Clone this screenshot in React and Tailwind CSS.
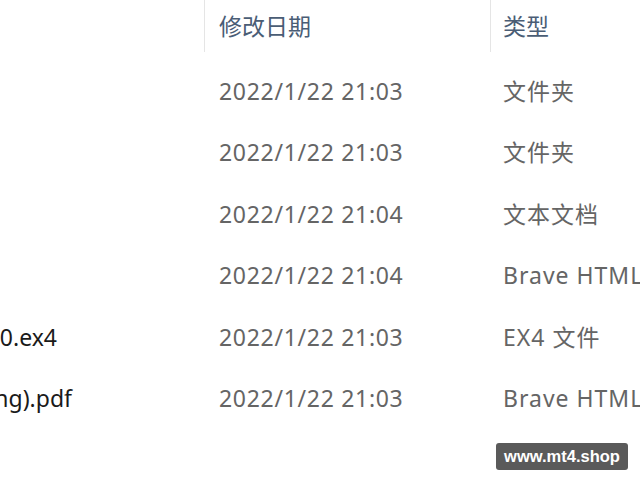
import React from "react";

const rows = [
  { name: "", date: "2022/1/22 21:03", type: "文件夹" },
  { name: "", date: "2022/1/22 21:03", type: "文件夹" },
  { name: "", date: "2022/1/22 21:04", type: "文本文档" },
  { name: "", date: "2022/1/22 21:04", type: "Brave HTML Document" },
  { name: "EA v10.ex4", date: "2022/1/22 21:03", type: "EX4 文件", pad: "pr-[148px]" },
  { name: "Manual (Setting).pdf", date: "2022/1/22 21:03", type: "Brave HTML Document", pad: "pr-[133px]" },
];

export default function App() {
  return (
    <div className="relative w-[640px] h-[480px] overflow-hidden bg-white font-['Noto_Sans','Noto_Sans_CJK_SC',sans-serif] text-[23px]">
      <div className="flex h-[52px] items-stretch">
        <div className="w-[204px] shrink-0" />
        <div className="w-[286px] shrink-0 border-l border-[#e5e5e5] flex items-center pl-[14px] text-[#4a5d75]">
          修改日期
        </div>
        <div className="flex-1 border-l border-[#e5e5e5] flex items-center pl-[12px] text-[#4a5d75]">
          类型
        </div>
      </div>
      <div className="pt-[8px]">
        {rows.map((r, i) => (
          <div key={i} className="flex h-[61.5px] items-center whitespace-nowrap">
            <div className={`w-[205px] shrink-0 flex justify-end overflow-hidden text-[#1a1a1a] ${r.pad || ""}`}>
              <span>{r.name}</span>
            </div>
            <div className="w-[286px] shrink-0 pl-[14px] text-[#656565] tracking-[0.7px]">{r.date}</div>
            <div className="flex-1 overflow-hidden pl-[12px] text-[#656565] tracking-[1px]">{r.type}</div>
          </div>
        ))}
      </div>
      <div className="absolute right-[12px] bottom-[10px] w-[132px] h-[27px] rounded-[3px] bg-[#5a5a5a] flex items-center justify-center text-white font-bold text-[16.5px] font-['Liberation_Sans',Arial,sans-serif]">
        www.mt4.shop
      </div>
    </div>
  );
}
